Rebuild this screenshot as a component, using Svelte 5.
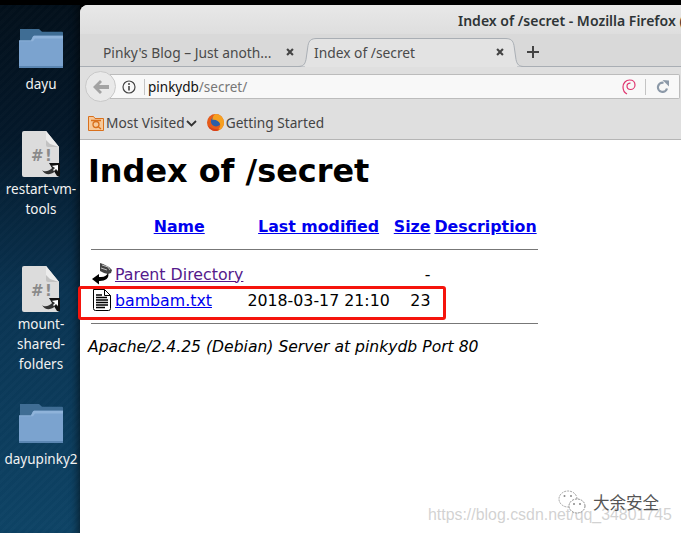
<script>
  const rows = [
    { name: 'Parent Directory', href: '#parent', modified: '', size: '-', icon: 'back', visited: true },
    { name: 'bambam.txt', href: '#bambam', modified: '2018-03-17 21:10', size: '23', icon: 'text', visited: false }
  ];

  const desktopItems = [
    { label: 'dayu', kind: 'folder', height: 102 },
    { label: 'restart-vm-tools', kind: 'script', height: 135 },
    { label: 'mount-shared-folders', kind: 'script', height: 138 },
    { label: 'dayupinky2', kind: 'folder', height: 100 }
  ];
</script>

<div class="screen">
  <div class="topbar"></div>
  <div class="workspace">
    <aside class="desktop">
      {#each desktopItems as item}
        <div class="desk-item" style="height: {item.height}px">
          {#if item.kind === 'folder'}
            <svg class="folder" width="44" height="39" viewBox="0 0 44 41" preserveAspectRatio="none">
              <path d="M1 0h19l3 3h20a1 1 0 0 1 1 1v14H1z" fill="#3f6d94" />
              <path d="M0 12h12l2-4 1-1h29v32H0z" fill="#7ba3cf" />
              <path d="M0 12h12l2-4 1-1h29v3H16l-2 3H0z" fill="#8fb3da" />
              <path d="M0 39h44v2H0z" fill="#5b86b2" />
            </svg>
          {:else}
            <div class="script">
              <svg width="38" height="46" viewBox="0 0 38 46">
                <path d="M2 0h22l13 16v28a2 2 0 0 1-2 2H2a2 2 0 0 1-2-2V2a2 2 0 0 1 2-2z" fill="#dcdcdc" />
                <path d="M24 0l13 16H26a2 2 0 0 1-2-2z" fill="#c2c2c2" />
                <path d="M24 0l13 16-9-3-4-4z" fill="#ececec" />
                <path d="M27 32h11v13H35z" fill="#111" />
                <path d="M20 39c2 2 7 2 11-3l-2-2h7v7l-2-2c-3 5-11 6-14 0z" fill="#333" />
                <path d="M30 35l6-1v6l-2-2-2 2-1-1 2-2z" fill="#fff" />
              </svg>
              <span class="shebang">#!</span>
            </div>
          {/if}
          <span class="desk-label">{item.label}</span>
        </div>
      {/each}
    </aside>

    <section class="window">
      <header class="titlebar"><span>Index of /secret - Mozilla Firefox (</span></header>

      <div class="tabstrip">
        <div class="tab">
          <span class="tab-title">Pinky's Blog – Just anoth...</span>
          <svg class="close" width="8" height="8" viewBox="0 0 9 9"><path d="M1.200 1.200l6.600 6.600M7.800 1.200L1.200 7.800" stroke="#444" stroke-width="2.400" /></svg>
        </div>
        <div class="tab active">
          <svg class="tab-curve" width="226" height="30" viewBox="0 0 226 30" fill="none">
            <path d="M0 28.500c5 0 7-2 8-7l2-14c1-5 3-7 9-7h188c6 0 8 2 9 7l2 14c1 5 3 7 8 7" fill="#e3e3e3" stroke="#a9aeb4" />
            <rect x="7" y="27" width="212" height="2" fill="#e3e3e3" />
          </svg>
          <span class="tab-title">Index of /secret</span>
          <svg class="close" width="8" height="8" viewBox="0 0 9 9"><path d="M1.200 1.200l6.600 6.600M7.800 1.200L1.200 7.800" stroke="#444" stroke-width="2.400" /></svg>
        </div>
        <svg class="plus" width="12" height="12" viewBox="0 0 12 12"><path d="M6 0v12M0 6h12" stroke="#444" stroke-width="2" /></svg>
      </div>

      <div class="navbar">
        <button class="back" aria-label="Back">
          <svg width="16" height="14" viewBox="0 0 16 14"><path d="M7 0l2 2-3 3h10v4H6l3 3-2 2-7-7z" fill="#a3a3a3" /></svg>
        </button>
        <div class="urlbar">
          <svg class="info" width="14" height="14" viewBox="0 0 14 14" fill="none">
            <circle cx="7" cy="7" r="6" stroke="#444" stroke-width="1.200" />
            <path d="M7 6v4.500" stroke="#444" stroke-width="1.600" />
            <circle cx="7" cy="3.900" r="1" fill="#444" />
          </svg>
          <span class="sep"></span>
          <span class="url">pinkydb<span class="url-path">/secret/</span></span>
          <svg class="swirl" width="14" height="16" viewBox="0 0 14 16" fill="none">
            <path d="M5 15C2 13.500 1 11 1 8c0-4 3-7 6.500-7S13 3 13 6s-2.500 4.500-4.500 4.500S5 9 5 7s1.500-3 3.500-2.800" stroke="#e0356f" stroke-width="1.200" />
          </svg>
          <span class="sep right"></span>
          <svg class="reload" width="13" height="13" viewBox="0 0 13 13" fill="none">
            <path d="M11 8.500A4.600 4.600 0 1 1 7.500 2.800" stroke="#8c99a8" stroke-width="2.200" />
            <path d="M6.500 0L13 0.500V6.500z" fill="#8c99a8" />
          </svg>
        </div>
      </div>

      <div class="bookmarks">
        <svg class="bm-folder" width="16" height="16" viewBox="0 0 16 16" fill="none">
          <path d="M0.500 1.500h5l1.500 2h8.500v12H0.500z" fill="#f7c99a" stroke="#d9701c" />
          <circle cx="8" cy="9.500" r="3" stroke="#d9701c" stroke-width="1.300" />
          <path d="M10 11.500l3 2.500M3 5.500h10" stroke="#d9701c" stroke-width="1.300" />
        </svg>
        <span class="bm-label">Most Visited</span>
        <svg class="chevron" width="11" height="7" viewBox="0 0 11 7" fill="none"><path d="M1 1l4.500 4.500L10 1" stroke="#333" stroke-width="1.800" /></svg>
        <svg class="firefox" width="17" height="17" viewBox="0 0 16 16">
          <circle cx="8" cy="8" r="8" fill="#e55b1a" />
          <circle cx="8.500" cy="7" r="4.800" fill="#2c5ea8" />
          <path d="M8 0c5 0 8 4 8 8s-3 8-8 8c3-1 5-3.500 4.300-6.500C11.500 6.500 8 4.800 5 5.500 5 3.500 6 1 8 0z" fill="#f6a01f" />
          <path d="M1 11c1 3 4 5 7 5 2 0 3-1 4-2-3 1-7 0-11-3z" fill="#d9401a" />
        </svg>
        <span class="bm-label">Getting Started</span>
      </div>

      <main class="page">
        <h1>Index of /secret</h1>
        <table>
          <thead>
            <tr>
              <th class="c-icon"></th>
              <th><a href="#name">Name</a></th>
              <th><a href="#modified">Last modified</a></th>
              <th><a href="#size">Size</a></th>
              <th><a href="#description">Description</a></th>
            </tr>
            <tr><th colspan="5" class="rule-cell"><hr /></th></tr>
          </thead>
          <tbody>
            {#each rows as row}
              <tr>
                <td class="c-icon">
                  {#if row.icon === 'back'}
                    <svg width="20" height="22" viewBox="0 0 20 22">
                      <path d="M8 0l3 1 6 3 3 3-1 3-3 1-4-1-4-2z" fill="#444" />
                      <path d="M10 2l6 2 2 3M9 5l6 2" stroke="#ddd" stroke-width="0.800" fill="none" />
                      <path d="M16 10c2 5-3 8-8 8H7v3.500L0 16l7-5v3h2c4 0 6-2 7-4z" fill="#000" />
                    </svg>
                  {:else}
                    <svg width="20" height="22" viewBox="0 0 20 22" fill="none">
                      <path d="M1.500 0.500h11l6 6v13a2 2 0 0 1-2 2h-13a2 2 0 0 1-2-2z" fill="#fff" stroke="#000" />
                      <path d="M12.500 0.500v6h6" stroke="#000" />
                      <path d="M4 6h6M4 8.500h11M4 11h12M4 13.500h12M4 16h12M4 18.500h9" stroke="#000" stroke-width="1.300" />
                    </svg>
                  {/if}
                </td>
                <td><a href={row.href} class:visited={row.visited}>{row.name}</a></td>
                <td>{row.modified}</td>
                <td class="c-size">{row.size}</td>
                <td></td>
              </tr>
            {/each}
            <tr><th colspan="5" class="rule-cell low"><hr /></th></tr>
          </tbody>
        </table>
        <address>Apache/2.4.25 (Debian) Server at pinkydb Port 80</address>
      </main>
    </section>
  </div>

  <div class="highlight"></div>

  <div class="watermark">https://blog.csdn.net/qq_34801745</div>
  <div class="stamp">
    <svg width="28" height="24" viewBox="0 0 28 24" fill="none">
      <ellipse cx="10" cy="9" rx="9" ry="8" stroke="#a0a0a0" stroke-dasharray="2 1" />
      <ellipse cx="19" cy="16" rx="8" ry="7" fill="#fff" stroke="#8a8a8a" stroke-dasharray="2 1" />
      <circle cx="6.500" cy="6" r="1" fill="#888" /><circle cx="13" cy="6" r="1" fill="#888" />
      <circle cx="16" cy="14" r="1" fill="#888" /><circle cx="22" cy="14" r="1" fill="#888" />
    </svg>
    <span>大余安全</span>
  </div>
</div>

<style>
  :global(body) {
    margin: 0;
    overflow: hidden;
  }

  .screen {
    position: relative;
    width: 681px;
    height: 533px;
    overflow: hidden;
    background: #000;
    display: flex;
    flex-direction: column;
    font-family: "Noto Sans", sans-serif;
  }

  .topbar {
    height: 5px;
    flex: none;
    background: #000;
  }

  .workspace {
    flex: 1;
    display: flex;
    min-height: 0;
  }

  .desktop {
    width: 80px;
    flex: none;
    padding: 24px 0 0 2px;
    box-sizing: border-box;
    background:
      repeating-linear-gradient(135deg, rgba(255, 255, 255, 0.012) 0 3px, rgba(0, 0, 0, 0.012) 3px 6px),
      linear-gradient(180deg, #03101b 0%, #04182a 25%, #0a3452 55%, #0e4466 100%);
    box-shadow: inset -8px 0 8px -6px rgba(0, 0, 0, 0.55);
  }

  .desk-item {
    display: flex;
    flex-direction: column;
    align-items: center;
  }

  .folder {
    margin-bottom: 6px;
  }

  .script {
    position: relative;
    width: 38px;
    height: 46px;
    margin-bottom: 2px;
  }

  .shebang {
    position: absolute;
    left: 9px;
    top: 16px;
    font-size: 15px;
    line-height: 18px;
    font-weight: 700;
    color: #8a8a8a;
    letter-spacing: 1.500px;
    font-family: "DejaVu Sans", sans-serif;
  }

  .desk-label {
    width: 76px;
    text-align: center;
    color: #f2f2f2;
    font-size: 13.500px;
    line-height: 20px;
    overflow-wrap: break-word;
  }

  .window {
    flex: 1;
    min-width: 0;
    display: flex;
    flex-direction: column;
    background: #fff;
    border-top-left-radius: 8px;
    overflow: hidden;
  }

  .titlebar {
    height: 29px;
    flex: none;
    padding-left: 378px;
    box-sizing: border-box;
    background: linear-gradient(180deg, #e8e8e8, #dedede);
    white-space: nowrap;
    overflow: hidden;
    font-size: 14px;
    font-weight: 600;
    line-height: 32px;
    color: #2e3436;
  }

  .tabstrip {
    height: 33px;
    flex: none;
    display: flex;
    align-items: stretch;
    background: #d9d9d9;
    border-bottom: 1px solid #a9aeb4;
    box-sizing: border-box;
    color: #4a4a4a;
    font-size: 13.800px;
  }

  .tab {
    position: relative;
    width: 220px;
    display: flex;
    align-items: center;
    justify-content: space-between;
    padding: 4px 6px 0 23px;
    box-sizing: border-box;
  }

  .tab.active {
    width: 213px;
    padding: 4px 9px 0 14px;
  }

  .tab-curve {
    position: absolute;
    left: -2px;
    top: 4px;
  }

  .tab-title,
  .tab .close {
    position: relative;
  }

  .plus {
    align-self: center;
    margin: 4px 0 0 14px;
  }

  .navbar {
    height: 39px;
    flex: none;
    display: flex;
    align-items: center;
    padding: 0 1px 0 5px;
    box-sizing: border-box;
    background: #dfdfdf;
  }

  .back {
    position: relative;
    z-index: 1;
    width: 31px;
    height: 31px;
    padding: 0;
    border-radius: 50%;
    border: 1px solid #c9c9c9;
    background: #e9e9e9;
    display: flex;
    align-items: center;
    justify-content: center;
  }

  .urlbar {
    flex: 1;
    height: 23px;
    margin-left: -6px;
    padding: 0 10px 0 12px;
    display: flex;
    align-items: center;
    background: #f8f8f8;
    border: 1px solid #bcbcbc;
    border-left: none;
    border-radius: 0 2px 2px 0;
  }

  .info {
    flex: none;
  }

  .sep {
    width: 1px;
    height: 16px;
    margin: 0 3px 0 8px;
    background: #c4c4c4;
  }

  .sep.right {
    margin: 0 10px 0 9px;
  }

  .url {
    flex: 1;
    font-size: 13.500px;
    color: #111;
  }

  .url-path {
    color: #777;
  }

  .bookmarks {
    height: 34px;
    flex: none;
    display: flex;
    align-items: center;
    padding-left: 8px;
    box-sizing: border-box;
    background: #dfdfdf;
    border-bottom: 1px solid #b5b5b5;
    font-size: 13.700px;
    color: #444;
  }

  .bm-label {
    margin-left: 2px;
  }

  .chevron {
    margin: 1px 10px 0 1px;
  }

  .page {
    flex: 1;
    padding: 0 0 0 8px;
    font-family: "DejaVu Sans", sans-serif;
    font-size: 15.800px;
    color: #000;
    background: #fff;
  }

  h1 {
    margin: 12px 0 24px;
    font-size: 31.900px;
    line-height: 38px;
    font-weight: 700;
  }

  table {
    border-collapse: separate;
    border-spacing: 2px;
    line-height: 19px;
    margin-left: 1px;
  }

  th,
  td {
    padding: 1px;
    white-space: nowrap;
  }

  th {
    font-weight: 700;
  }

  .c-icon {
    line-height: 0;
    padding-right: 0;
  }

  .c-icon svg {
    display: block;
  }

  .c-size {
    text-align: right;
  }

  .rule-cell {
    padding: 0;
    line-height: 0;
  }

  hr {
    margin: 10px 0;
    border: none;
    border-top: 1px solid #777;
  }

  .rule-cell.low hr {
    margin: 9px 0 0;
  }

  a {
    color: #0000ee;
    text-decoration: underline;
  }

  a.visited {
    color: #551a8b;
  }

  address {
    margin-top: 12px;
    font-size: 15.600px;
    line-height: 19px;
    font-style: italic;
  }

  .highlight {
    position: absolute;
    left: 78px;
    top: 286px;
    width: 368px;
    height: 34px;
    box-sizing: border-box;
    border: 3px solid #f5140c;
    border-radius: 3px;
  }

  .stamp {
    position: absolute;
    left: 558px;
    top: 490px;
    display: flex;
    align-items: center;
    gap: 7px;
    font-family: "Noto Sans CJK SC", sans-serif;
    font-size: 16.500px;
    line-height: 24px;
    color: #555;
  }

  .watermark {
    position: absolute;
    left: 428px;
    top: 505px;
    font-family: "Liberation Sans", sans-serif;
    font-size: 15.900px;
    line-height: 20px;
    color: rgba(190, 190, 190, 0.7);
    white-space: nowrap;
  }
</style>
